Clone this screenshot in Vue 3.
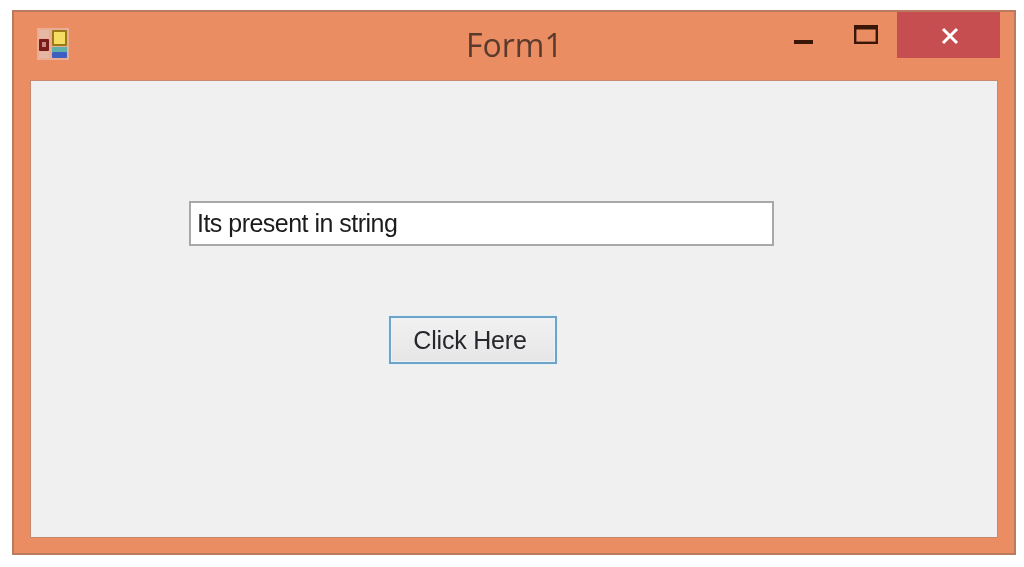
<template>
  <div class="page">
    <div class="window">
      <div class="titlebar">
        <svg class="app-icon" width="32" height="32" viewBox="0 0 32 32">
          <rect x="0" y="0" width="32" height="32" fill="#e8ad92" />
          <rect x="2" y="2" width="10" height="8" fill="#e4b8a4" />
          <rect x="2" y="24" width="10" height="6" fill="#e4b8a4" />
          <rect x="2" y="11" width="10" height="12" rx="1" fill="#7a1c1c" />
          <rect x="5" y="14" width="4" height="5" fill="#c98a84" />
          <rect x="15" y="2" width="15" height="16" rx="1" fill="#9a7a18" />
          <rect x="17" y="4" width="11" height="12" fill="#f5dc62" />
          <rect x="15" y="19" width="15" height="5" fill="#5fb0a6" />
          <rect x="15" y="24" width="15" height="6" rx="1" fill="#3f5fc0" />
        </svg>
        <span class="title">Form1</span>
        <div class="controls">
          <svg class="ctrl min" width="20" height="8" viewBox="0 0 20 8">
            <rect x="0" y="1" width="19" height="4" fill="#3a1606" />
          </svg>
          <svg class="ctrl max" width="24" height="19" viewBox="0 0 24 19">
            <rect x="1.2" y="1.2" width="21.6" height="16.6" fill="none" stroke="#3a1606" stroke-width="2.4" />
            <rect x="1" y="1" width="22" height="3.5" fill="#3a1606" />
          </svg>
          <button class="close">
            <svg width="20" height="20" viewBox="0 0 20 20">
              <path d="M3 3 L17 17 M17 3 L3 17" stroke="#fff" stroke-width="3" fill="none" />
            </svg>
          </button>
        </div>
      </div>
      <div class="client">
        <div class="textbox"><span class="soft">Its present in string</span></div>
        <button class="click-btn"><span class="soft">Click Here</span></button>
      </div>
    </div>
  </div>
</template>

<script setup>
</script>

<style>
body {
  background: #fff;
}
</style>

<style scoped>
.page {
  width: 1024px;
  height: 567px;
  padding: 10px 8px 12px 12px;
  box-sizing: border-box;
  background: #fff;
  overflow: hidden;
}

.window {
  width: 100%;
  height: 100%;
  box-sizing: border-box;
  background: #ea8d63;
  border: 2px solid #b97a5e;
  padding: 0 16px 15px 16px;
  display: flex;
  flex-direction: column;
}

.titlebar {
  height: 68px;
  flex: none;
  position: relative;
  display: flex;
  align-items: flex-start;
}

.app-icon {
  margin: 16px 0 0 7px;
  filter: blur(0.7px);
}

.title {
  position: absolute;
  left: 436px;
  top: 13px;
  font-family: "Open Sans", sans-serif;
  font-size: 32px;
  line-height: 40px;
  color: #5a3a2c;
  filter: blur(0.4px);
}

.controls {
  margin-left: auto;
  margin-right: -2px;
  display: flex;
  align-items: flex-start;
}

.ctrl {
  flex: none;
  filter: blur(0.4px);
}

.min {
  margin-top: 27px;
}

.max {
  margin: 13px 0 0 40px;
}

.close {
  width: 103px;
  height: 46px;
  margin-left: 19px;
  border: none;
  padding: 2px 0 0 2px;
  background: #c74e50;
  display: flex;
  align-items: center;
  justify-content: center;
}

.client {
  flex: 1;
  background: #f0f0f0;
  border: 1px solid #c58a6e;
  padding-top: 120px;
  padding-left: 158px;
}

.textbox {
  width: 585px;
  height: 45px;
  box-sizing: border-box;
  background: #fff;
  border: 2px solid #a8a8a8;
  padding-left: 6px;
  font-family: "Liberation Sans", Arial, sans-serif;
  font-size: 25px;
  line-height: 41px;
  letter-spacing: -0.52px;
  color: #1c1c1c;
}

.click-btn {
  display: block;
  width: 168px;
  height: 48px;
  margin: 70px 0 0 200px;
  box-sizing: border-box;
  background: linear-gradient(#f1f1f1, #e6e6e6);
  border: 2px solid #6fa3c8;
  box-shadow: 0 0 0 1px #e2f0f9, inset 0 0 0 1px #e8f3fa;
  padding: 0 6px 0 0;
  font-family: "Liberation Sans", Arial, sans-serif;
  font-size: 25px;
  letter-spacing: -0.2px;
  color: #26262c;
}

.soft {
  display: inline-block;
  filter: blur(0.4px);
}
</style>
